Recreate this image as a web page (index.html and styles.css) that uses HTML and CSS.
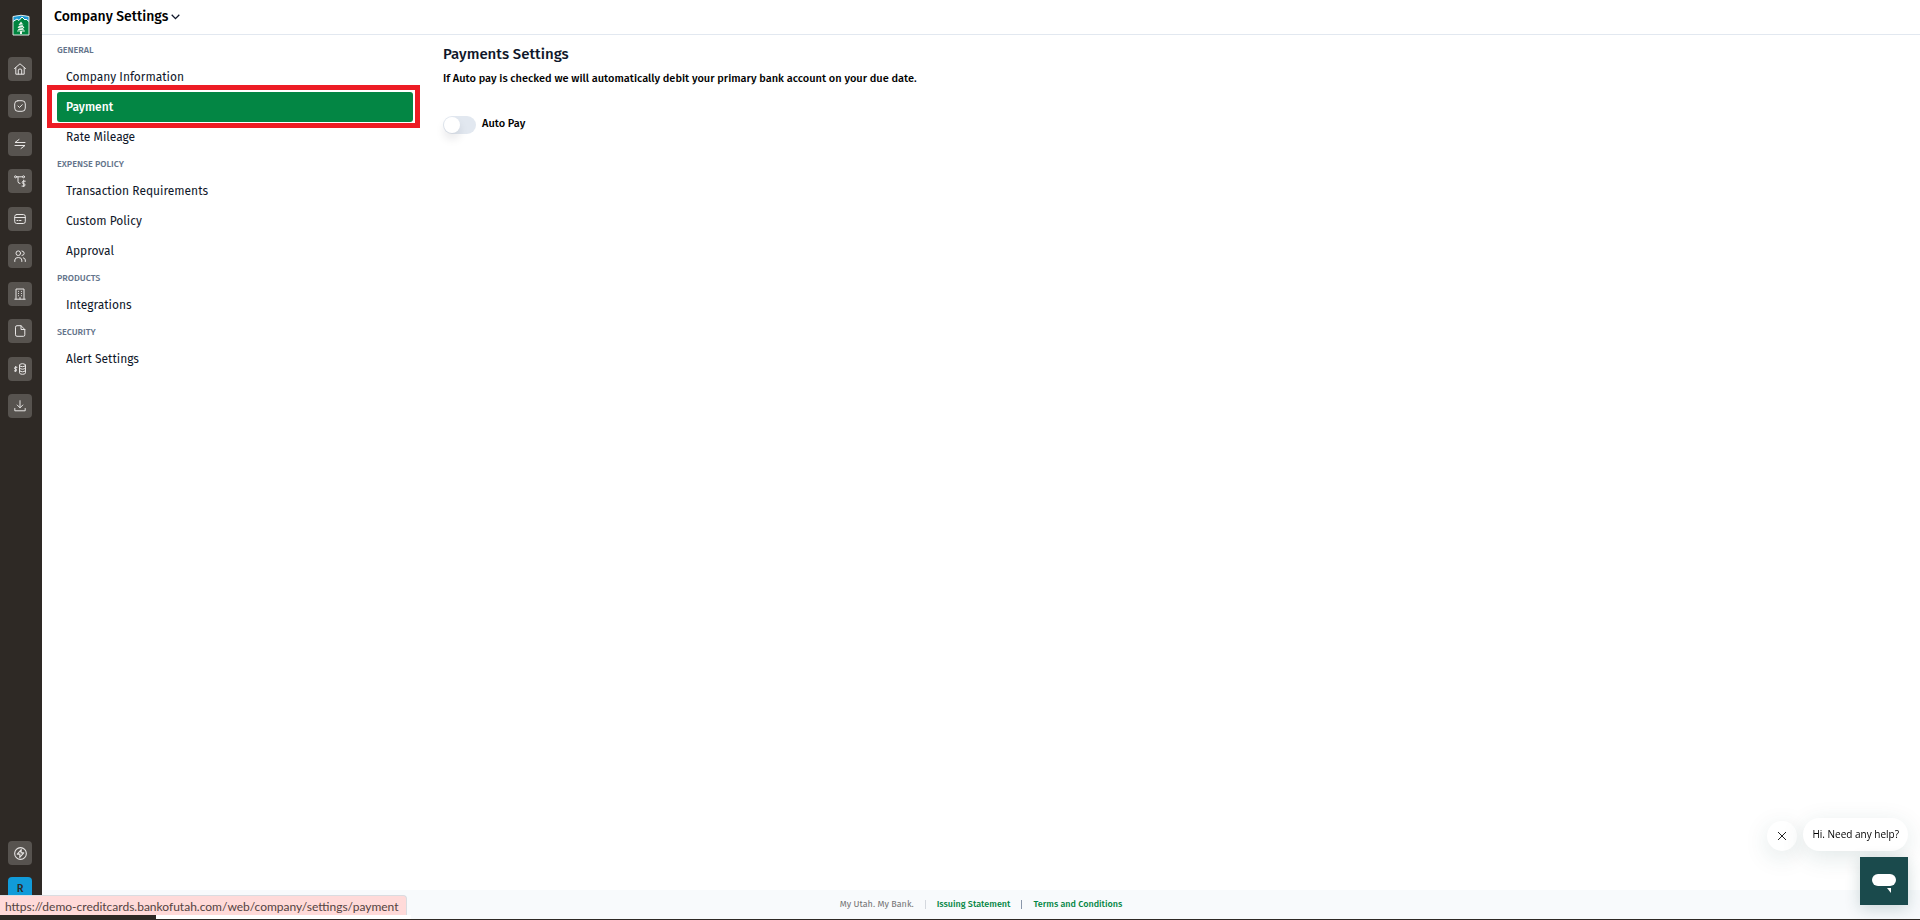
FILE: index.html
```html
<!DOCTYPE html>
<html lang="en">
<head>
<meta charset="utf-8">
<title>Company Settings</title>
<meta name="viewport" content="width=device-width, initial-scale=1">
<link rel="stylesheet" href="styles.css">
</head>
<body>
<div class="app">
  <aside class="rail">
    <a class="logo" href="#" aria-label="Home">
      <svg width="18" height="22" viewBox="0 0 18 22">
        <path d="M1 2.500Q9 0 17 2.500V21H1Z" fill="#1a9ad6"/>
        <path d="M1 8L5 5L7 6.500L10 3L13 6L14 5L17 8V21H1Z" fill="#00843f"/>
        <path d="M1 7.500L5 5L7 6.500L10 3L13 6L14 5L17 7.500" fill="none" stroke="#fff"/>
        <path d="M9 7.500L11.500 11H10.500L12.500 14H11L13 17.500H10V20H8V17.500H5L7 14H5.500L7.500 11H6.500Z" fill="#eef6ef"/>
        <path d="M7 11.500l4-1M6 14.500l5-1M6 17l6-1" stroke="#00843f" stroke-width=".7" fill="none"/>
        <path d="M1 2.500Q9 0 17 2.500V21H1Z" fill="none" stroke="#dfe7e4"/>
      </svg>
    </a>
    <nav class="rail-list" aria-label="Main">
      <a class="tile" href="#" aria-label="Dashboard"><svg class="icon" viewBox="0 0 12 12"><path d="M.5 5.500L6 .8l5.500 4.700M1.800 4.600v6.600h8.400V4.600M4.300 11V7q0-1 1.700-1t1.700 1v4"/></svg></a>
      <a class="tile" href="#" aria-label="Tasks"><svg class="icon" viewBox="0 0 12 12"><rect x=".7" y=".7" width="10.600" height="10.600" rx="3.200"/><path d="M4 6l1.500 1.500L8.200 4.700"/></svg></a>
      <a class="tile" href="#" aria-label="Transactions"><svg class="icon" viewBox="0 0 12 12"><path d="M5 1.500L1 4.500H11M1 7.500H11L7 10.500"/></svg></a>
      <a class="tile" href="#" aria-label="Payments"><svg class="icon" viewBox="0 0 12 12"><circle cx="1.500" cy="1.800" r="1"/><circle cx="9.500" cy="1.800" r="1"/><path d="M2.500 1.800h6M4 2v4.500q0 2 2 2M11.300 6.200H9.500q-1.300 0-1.300 1.200t1.300 1.200 1.500 1.200-1.300 1.300H8M9.700 5.200v6.800"/></svg></a>
      <a class="tile" href="#" aria-label="Cards"><svg class="icon" viewBox="0 0 12 12"><rect x=".7" y="1.500" width="10.600" height="9" rx="2"/><path d="M.8 4.500h10.400M3 7.500h1M5.500 7.500h1.500"/></svg></a>
      <a class="tile" href="#" aria-label="People"><svg class="icon" viewBox="0 0 12 12"><circle cx="4.300" cy="3.200" r="2.300"/><path d="M.8 11.500V10q0-2.500 3.500-2.500T7.800 10v1.500M8 1q2.200.3 2.200 2.300T8 5.500M9.300 7.800q2 .5 2 2.200v1.500"/></svg></a>
      <a class="tile" href="#" aria-label="Company"><svg class="icon" viewBox="0 0 12 12"><path d="M2 11V1h8v10M.8 11.200h10.400"/><path d="M4.500 3.300v.1M7.500 3.300v.1M4.500 5.500v.1M7.500 5.500v.1M4.500 7.700v.1M7.500 7.700v.1M6 9.500V11"/></svg></a>
      <a class="tile" href="#" aria-label="Statements"><svg class="icon" viewBox="0 0 12 12"><path d="M7 .7H3Q1.500.7 1.500 2.200v7.600q0 1.500 1.500 1.500h6.500q1.300 0 1.300-1.500V4.500L7 .7v3.800h3.800"/></svg></a>
      <a class="tile" href="#" aria-label="Budgets"><svg class="icon" viewBox="0 0 12 12"><path d="M3 4.300H1.500q-1 0-1 .9t1 .9 1 .9-1 .9H0M1.700 3.400v5.200"/><ellipse cx="8.500" cy="2.200" rx="3" ry="1.500"/><path d="M5.500 2.200v7.600q0 1.500 3 1.500t3-1.500V2.200M5.500 4.700q0 1.500 3 1.500t3-1.500M5.500 7.300q0 1.500 3 1.500t3-1.500"/></svg></a>
      <a class="tile" href="#" aria-label="Downloads"><svg class="icon" viewBox="0 0 12 12"><path d="M6 .7v7M3.200 5L6 7.800 8.800 5M.8 8.500v2.300h10.400V8.500"/></svg></a>
    </nav>
    <div class="rail-end">
      <a class="tile" href="#" aria-label="Activity"><svg class="icon large" viewBox="0 0 12 12"><circle cx="6" cy="6" r="5.400"/><path d="M6.700 2.400L3 6.600h2.500L5.300 9.600 9 5.400H6.500Z"/></svg></a>
      <button class="tile user" type="button">R</button>
    </div>
  </aside>

  <div class="page">
    <header class="top">
      <button class="title" type="button">Company Settings
        <svg class="chevron" width="9" height="6" viewBox="0 0 9 6"><path d="M.7.800L4.500 4.600 8.300.800"/></svg>
      </button>
    </header>
    <div class="body">
      <nav class="menu" aria-label="Settings">
        <h2 class="group">GENERAL</h2>
        <a class="item" href="#">Company Information</a>
        <a class="item active" href="#" aria-current="page">Payment</a>
        <a class="item" href="#">Rate Mileage</a>
        <h2 class="group">EXPENSE POLICY</h2>
        <a class="item" href="#">Transaction Requirements</a>
        <a class="item" href="#">Custom Policy</a>
        <a class="item" href="#">Approval</a>
        <h2 class="group">PRODUCTS</h2>
        <a class="item" href="#">Integrations</a>
        <h2 class="group">SECURITY</h2>
        <a class="item" href="#">Alert Settings</a>
      </nav>
      <main class="content">
        <h1 class="heading">Payments Settings</h1>
        <p class="note">If Auto pay is checked we will automatically debit your primary bank account on your due date.</p>
        <div class="field">
          <input class="switch" type="checkbox" role="switch" id="autopay">
          <label class="field-label" for="autopay">Auto Pay</label>
        </div>
      </main>
    </div>
    <footer class="foot">
      <span class="motto">My Utah. My Bank.</span>
      <span class="bar"></span>
      <a class="foot-link" href="#">Issuing Statement</a>
      <span class="bar dark"></span>
      <a class="foot-link" href="#">Terms and Conditions</a>
    </footer>
  </div>
</div>

<div class="chat">
  <div class="chat-row">
    <button class="close" type="button" aria-label="Dismiss"><svg width="10" height="10" viewBox="0 0 10 10"><path d="M1 1l8 8M9 1L1 9"/></svg></button>
    <div class="bubble">Hi. Need any help?</div>
  </div>
  <button class="launcher" type="button" aria-label="Open chat">
    <svg width="24" height="19" viewBox="0 0 24 19"><rect width="24" height="12" rx="6"/><path d="M15 14h4v5Z"/></svg>
  </button>
</div>

<div class="status">https://demo-creditcards.bankofutah.com/web/company/settings/payment</div>
<div class="edge"><span class="edge-block"></span></div>
</body>
</html>
```

FILE: styles.css
```css
* { box-sizing: border-box; }

body {
  margin: 0;
  background: #fff;
  color: #0f172a;
  font-family: "Fira Sans", "Noto Sans", sans-serif;
  font-size: 12px;
  line-height: 18px;
}

a { color: inherit; text-decoration: none; }
button { border: 0; padding: 0; font: inherit; color: inherit; background: none; }
h1, h2, p { margin: 0; }

.app { display: flex; min-height: 100vh; }

.rail {
  display: flex;
  flex-direction: column;
  align-items: center;
  width: 42px;
  padding: 14px 2px 19px 0;
  background: #2e2925;
}
.logo { height: 22px; margin-left: 2px; }
.logo svg { display: block; }
.rail-list {
  display: flex;
  flex-direction: column;
  justify-content: space-between;
  height: 361px;
  margin-top: 21px;
}
.tile {
  display: flex;
  align-items: center;
  justify-content: center;
  width: 24px;
  height: 24px;
  border-radius: 4px;
  background: #57534f;
}
.icon {
  width: 12px;
  height: 12px;
  fill: none;
  stroke: #e7e5e4;
  stroke-width: 1;
  stroke-linecap: round;
  stroke-linejoin: round;
}
.large { width: 13px; height: 13px; }
.rail-end { display: grid; gap: 12px; margin-top: auto; }
.user { background: #119bd9; color: #2e2925; font-size: 11px; font-weight: 500; }

.page { display: flex; flex: 1; flex-direction: column; min-width: 0; }
.top { padding: 4px 12px 5px; border-bottom: 1px solid #e2e8f0; }
.title {
  display: flex;
  align-items: center;
  gap: 3px;
  font-size: 14px;
  font-weight: 500;
  line-height: 25px;
  color: #000;
}
.chevron { fill: none; stroke: #0f172a; stroke-width: 1.3; }

.body { display: flex; flex: 1; }
.menu { flex: 0 0 385px; padding: 3px 14px 3px 15px; }
.group {
  padding-top: 1px;
  font-size: 9px;
  font-weight: 500;
  line-height: 23px;
  color: #64748b;
}
.item {
  display: block;
  padding: 0 9px;
  border-radius: 3px;
  line-height: 30px;
}
.active {
  position: relative;
  background: #038644;
  color: #fff;
  font-weight: 500;
}
.active::after {
  content: "";
  position: absolute;
  inset: -7px -7px -6px -10px;
  border: 5px solid #ed1c24;
}
.content { flex: 1; padding: 9px 16px; }
.heading { font-size: 15px; font-weight: 500; line-height: 21px; }
.note { margin-top: 5px; font-size: 11px; font-weight: 500; color: #000; }
.field { display: flex; align-items: flex-start; gap: 6px; margin-top: 27px; }
.switch {
  appearance: none;
  width: 33px;
  height: 18px;
  margin: 1px 0 0;
  border-radius: 9px;
  background: #e2e8f0;
}
.switch::before {
  content: "";
  display: block;
  width: 16px;
  height: 16px;
  margin: 1px;
  border-radius: 50%;
  background: #fff;
  box-shadow: 0 6px 10px rgba(15, 23, 42, .1);
}
.field-label { font-size: 11px; font-weight: 500; color: #000; }

.foot {
  display: flex;
  align-items: center;
  justify-content: center;
  gap: 11px;
  height: 30px;
  padding-bottom: 2px;
  background: #f8fafc;
  font-size: 9px;
  color: #737373;
}
.bar { width: 1px; height: 9px; background: #d4d8de; }
.dark { background: #8a97aa; }
.foot-link { color: #038644; font-weight: 500; }

.chat {
  position: fixed;
  right: 12px;
  bottom: 15px;
  display: grid;
  justify-items: end;
  gap: 6px;
}
.chat-row { display: flex; gap: 6px; }
.close, .bubble {
  height: 33px;
  border-radius: 17px;
  background: #fff;
  box-shadow: 0 6px 24px rgba(26, 74, 76, .13);
}
.close {
  display: grid;
  place-items: center;
  width: 30px;
  height: 30px;
  margin-top: 3px;
}
.close svg { fill: none; stroke: #222; stroke-width: 1; }
.bubble {
  padding: 0 9px;
  color: #000;
  font-family: "Segoe UI", "Open Sans", sans-serif;
  font-size: 10px;
  line-height: 33px;
}
.launcher {
  display: grid;
  place-items: center;
  width: 48px;
  height: 48px;
  padding-top: 4px;
  background: #1a4a4c;
  box-shadow: 0 4px 16px rgba(26, 74, 76, .2);
}
.launcher svg { fill: #fff; }

.status {
  position: fixed;
  left: 0;
  bottom: 5px;
  height: 20px;
  padding: 0 7px 0 5px;
  border-top: 1px solid #dadce0;
  border-right: 1px solid #dadce0;
  border-top-right-radius: 4px;
  background: #ffdad9;
  color: #534341;
  font-family: "Segoe UI", Lato, sans-serif;
  font-size: 12px;
  line-height: 22px;
}
.edge {
  position: fixed;
  right: 0;
  bottom: 0;
  left: 0;
  height: 5px;
  border-bottom: 1px solid #2e2925;
  background: linear-gradient(90deg, #fff 411px, transparent 411px);
}
.edge-block { display: block; width: 156px; height: 5px; background: #2e2925; }
```
